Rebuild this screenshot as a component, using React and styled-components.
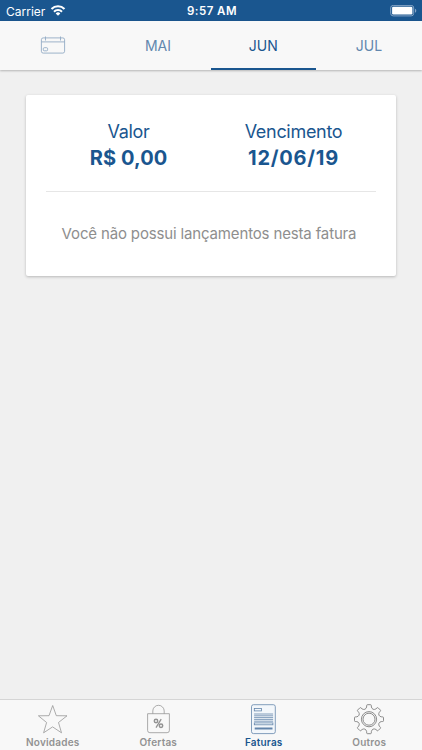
import React from 'react'
import styled, { createGlobalStyle } from 'styled-components'

const months = [
    { id: 'mai', label: 'MAI' },
    { id: 'jun', label: 'JUN', active: true },
    { id: 'jul', label: 'JUL' },
]

// outline of the cog, one tooth rotated eight times
const gearPath = () => {
    const point = (x, y, turn) => {
        const a = (turn * Math.PI) / 4
        const px = 15 + x * Math.cos(a) - y * Math.sin(a)
        const py = 15.2 + x * Math.sin(a) + y * Math.cos(a)
        return `${px.toFixed(2)} ${py.toFixed(2)}`
    }
    let d = `M${point(-1.5, -14.5, 0)}`
    for (let i = 0; i < 8; i++) {
        d += `L${point(1.5, -14.5, i)}Q${point(2.3, -14.5, i)} ${point(2.3, -13.7, i)}`
        d += `L${point(2.4, -12.2, i)}Q${point(2.6, -10.8, i)} ${point(4.1, -9.9, i)}`
        d += `Q${point(5.8, -9.48, i)} ${point(-2.4, -12.2, i + 1)}`
        d += `L${point(-2.3, -13.7, i + 1)}Q${point(-2.3, -14.5, i + 1)} ${point(-1.5, -14.5, i + 1)}`
    }
    return d + 'Z'
}

const WifiIcon = () => (
    <svg width='16' height='12' viewBox='0 0 16 12' fill='none' stroke='#fff'>
        <path d='M1.5 4a9.2 9.2 0 0 1 13 0' strokeWidth='2.1' />
        <path d='M4 6.7a5.6 5.6 0 0 1 8 0' strokeWidth='2' />
        <path d='M5.7 8.4a3.2 3.2 0 0 1 4.6 0L8 10.8z' fill='#fff' stroke='none' />
    </svg>
)

const BatteryIcon = () => (
    <svg width='27' height='12' viewBox='0 0 27 12' fill='none'>
        <rect x='.7' y='.4' width='23' height='10.5' rx='2.5' stroke='#84a4c6' />
        <rect x='2.1' y='1.8' width='20.3' height='7.7' rx='1.2' fill='#fff' />
        <path d='M25 3.8v4c1.8-.7 1.8-3.3 0-4z' fill='#84a4c6' />
    </svg>
)

const CalendarIcon = () => (
    <svg width='26' height='20' viewBox='0 0 26 20' fill='none' stroke='#93abc5' strokeWidth='.9'>
        <rect x='1.4' y='1.9' width='23.2' height='15.2' rx='1.8' />
        <path d='M1.4 5.9h23.2M5.5 .5v4M20.5 .5v4' />
        <rect x='3.3' y='11.7' width='4.3' height='3.1' rx='1' />
    </svg>
)

const StarIcon = () => (
    <svg width='31' height='31' viewBox='0 0 31 31' fill='none' stroke='#929292' strokeWidth='.75'>
        <path d='M15.7 1.5L19.3 11.7l10.7.1-8.5 6.7 3 10.3-8.9-5.9-9 5.9 3-10.3-8.2-6.7 10.6-.1z' />
    </svg>
)

const BagIcon = () => (
    <svg width='31' height='31' viewBox='0 0 31 31' fill='none' stroke='#929292' strokeWidth='.75'>
        <path d='M4.6 9.7h21.8v16.7q0 2.3-2.3 2.3H6.9q-2.3 0-2.3-2.3z' />
        <path d='M9.8 9.7V7a5.7 5.7 0 0 1 11.4 0v2.7' />
        <circle cx='13' cy='17' r='1.7' strokeWidth='1.5' />
        <circle cx='18' cy='21.8' r='1.7' strokeWidth='1.5' />
        <path d='M18.2 15.2l-5.2 8.4' strokeWidth='1.3' />
    </svg>
)

const BillIcon = () => (
    <svg width='31' height='31' viewBox='0 0 31 31' fill='none' stroke='#6385ab' strokeWidth='.8'>
        <rect x='3.5' y='.7' width='23.8' height='28.9' rx='2' fill='#f3f7fb' />
        <rect x='6.3' y='4.4' width='7.2' height='2.5' />
        <path d='M6.1 10h19M6.1 11.8h19M6.1 13.6h19M6.1 15.4h19M6.1 17.2h19' />
        <rect x='6.3' y='18.9' width='18.6' height='1.9' />
        <path d='M6.7 24.5h17.8' strokeWidth='2' />
    </svg>
)

const GearIcon = () => (
    <svg width='31' height='31' viewBox='0 0 31 31' fill='none' stroke='#808080' strokeWidth='.9'>
        <path d={gearPath()} />
        <circle cx='15' cy='15.2' r='7.6' />
        <circle cx='15' cy='15.2' r='6' />
    </svg>
)

const navItems = [
    { id: 'novidades', label: 'Novidades', icon: <StarIcon /> },
    { id: 'ofertas', label: 'Ofertas', icon: <BagIcon /> },
    { id: 'faturas', label: 'Faturas', icon: <BillIcon />, active: true },
    { id: 'outros', label: 'Outros', icon: <GearIcon /> },
]

const App = () => {
    return (
        <>
            <GlobalStyle />
            <Screen>
                <StatusBar>
                    <Carrier>Carrier <WifiIcon /></Carrier>
                    <Clock>9:57 AM</Clock>
                    <Battery><BatteryIcon /></Battery>
                </StatusBar>
                <MonthTabs>
                    <MonthTab aria-label='Calendário'><CalendarIcon /></MonthTab>
                    {months.map(({ id, label, active }) => (
                        <MonthTab key={id} $active={active}>{label}</MonthTab>
                    ))}
                </MonthTabs>
                <Content>
                    <Card>
                        <Summary>
                            <Column>
                                <Label>Valor</Label>
                                <Value>R$ 0,00</Value>
                            </Column>
                            <Column>
                                <Label>Vencimento</Label>
                                <Value $spacing='0.75px'>12/06/19</Value>
                            </Column>
                        </Summary>
                        <Empty>Você não possui lançamentos nesta fatura</Empty>
                    </Card>
                </Content>
                <BottomNav>
                    {navItems.map(({ id, label, icon, active }) => (
                        <NavItem key={id} $active={active}>
                            {icon}
                            <span>{label}</span>
                        </NavItem>
                    ))}
                </BottomNav>
            </Screen>
        </>
    )
}

const GlobalStyle = createGlobalStyle`
    *{
        box-sizing:border-box;
    }
    body{
        margin:0;
        font-family: Inter, sans-serif;
    }
    button{
        font-family:inherit;
        background:none;
        border:none;
        padding:0;
    }
    svg{
        display:block;
        flex-shrink:0;
    }
`

const Screen = styled.div`
    height:100vh;
    display:flex;
    flex-direction:column;
    background:#f0f0f0;
    overflow:hidden;
`

const StatusBar = styled.header`
    height:21px;
    flex-shrink:0;
    display:grid;
    grid-template-columns:1fr auto 1fr;
    align-items:center;
    padding:0 5px 0 6px;
    background:#1a568f;
    color:#fff;
    font-size:12px;
    line-height:21px;
`

const Carrier = styled.div`
    display:flex;
    align-items:center;
    gap:5px;
`

const Clock = styled.div`
    font-weight:600;
    font-size:11.5px;
    letter-spacing:0.45px;
    padding:1px 0 0 1px;
`

const Battery = styled.div`
    display:flex;
    justify-content:flex-end;
`

const MonthTabs = styled.nav`
    height:49px;
    flex-shrink:0;
    display:grid;
    grid-template-columns:repeat(3, 105.3px) 1fr;
    background:#f8f8f8;
    box-shadow:0 1px 2px rgba(0, 0, 0, 0.25);
`

const MonthTab = styled.button`
    display:flex;
    align-items:center;
    justify-content:center;
    padding-top:2px;
    border-bottom:2px solid ${({ $active }) => ($active ? '#1a568f' : 'transparent')};
    color:${({ $active }) => ($active ? '#1a568f' : '#6287ae')};
    font-size:14px;
`

const Content = styled.main`
    flex:1;
    padding:25px 26px;
`

const Card = styled.section`
    height:181px;
    padding:0 20px;
    background:#fff;
    border-radius:2px;
    box-shadow:0 1px 3px rgba(0, 0, 0, 0.24);
`

const Summary = styled.div`
    height:97px;
    display:grid;
    grid-template-columns:1fr 1fr;
    padding-top:24px;
    border-bottom:1px solid #e6e6e6;
`

const Column = styled.div`
    text-align:center;
    color:#1a568f;
`

const Label = styled.div`
    font-size:18px;
    line-height:26px;
    letter-spacing:-0.3px;
`

const Value = styled.div`
    font-size:20px;
    line-height:26px;
    font-weight:700;
    letter-spacing:${({ $spacing }) => $spacing || '0.1px'};
`

const Empty = styled.p`
    margin:0;
    padding:30px 4px 0 0;
    color:#8e8e8e;
    font-size:15px;
    line-height:24px;
    letter-spacing:-0.15px;
    text-align:center;
    white-space:nowrap;
`

const BottomNav = styled.footer`
    height:51px;
    flex-shrink:0;
    display:grid;
    grid-template-columns:repeat(4, 1fr);
    background:#f8f8f8;
    border-top:1px solid #d5d5d5;
`

const NavItem = styled.button`
    display:flex;
    flex-direction:column;
    align-items:center;
    padding-top:4px;
    color:${({ $active }) => ($active ? '#1a568f' : '#929292')};
    font-size:10px;
    line-height:15px;
    letter-spacing:0.2px;
    font-weight:600;
`

export default App
